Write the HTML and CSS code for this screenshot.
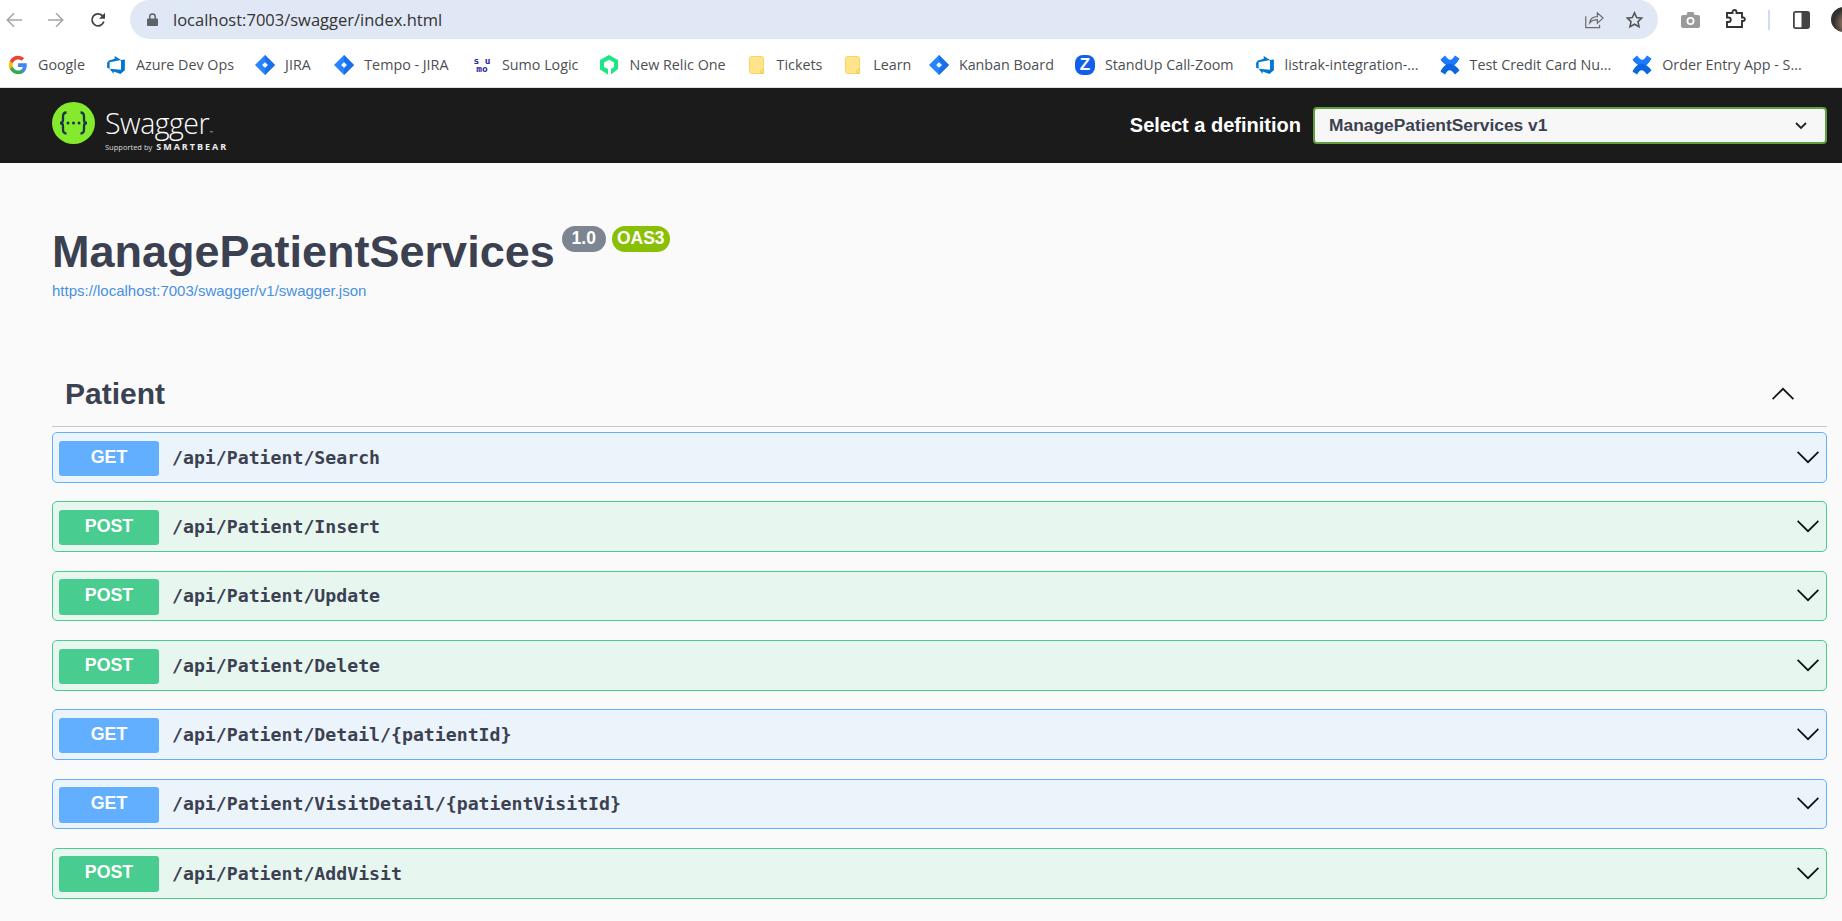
FILE: index.html
```html
<!DOCTYPE html>
<html lang="en">
<head>
<meta charset="utf-8">
<title>Swagger UI</title>
<link rel="stylesheet" href="styles.css">
</head>
<body>
<svg class="defs" width="0" height="0" aria-hidden="true">
  <defs>
    <symbol id="jira" viewBox="0 0 20 20"><path fill="#2684ff" d="M10 0l10 10-10 10L0 10z"/><path fill="#1a6fe8" d="M10 0l10 10-10 10 0-6 4-4-4-4z"/><path fill="#fff" d="M10 7.200l2.800 2.800-2.800 2.800L7.200 10z"/></symbol>
    <symbol id="azure" viewBox="0 0 18 18"><path fill="#0078d4" d="M17 4v9.740l-4 3.280-6.200-2.260V17L3.290 12.410l10.230.8V4.440Zm-3.410.49L7.850 1V3.290L2.580 4.840 1 6.870v4.610l2.260 1V6.570Z"/></symbol>
    <symbol id="folder" viewBox="0 0 20 20"><g transform="translate(2 1)"><path fill="#ffe489" stroke="#f7d566" d="M2.500.5h10a2 2 0 0 1 2 2v13a2 2 0 0 1-2 2h-10a2 2 0 0 1-2-2v-13a2 2 0 0 1 2-2z"/><path fill="#ffe489" stroke="#f3c94f" d="M12 17.500v-3a1.200 1.200 0 0 1 2.600 0v3z"/></g></symbol>
    <symbol id="confluence" viewBox="0 0 20 20"><path fill="#1d7afc" d="M.5 4.500L5 .5c2 2.600 3.400 4.200 5.300 4.200 1.700 0 3-1.500 4.700-4.200l4.500 3C17 8.500 14.300 11 10.600 11 6.500 11 3 8.500.5 4.500z"/><path fill="#0c66e4" d="M19.500 15.500L15 19.500c-2-2.600-3.400-4.200-5.300-4.200-1.700 0-3 1.500-4.700 4.200l-4.500-3C3 11.500 5.700 9 9.400 9c4.100 0 7.600 2.500 10.100 6.500z"/></symbol>
    <symbol id="chev-down" viewBox="0 0 22 13"><path fill="none" stroke="#111" stroke-width="1.700" d="M.6.8L11 11.200 21.400.8"/></symbol>
  </defs>
</svg>

<header class="browser-toolbar">
  <div class="nav-buttons">
    <svg class="nav-icon" viewBox="0 0 16 16"><path fill="none" stroke="#a6a6a6" stroke-width="1.600" d="M16 8H1.500M8 1.300L1.300 8 8 14.700"/></svg>
    <svg class="nav-icon" viewBox="0 0 16 16"><path fill="none" stroke="#a6a6a6" stroke-width="1.600" d="M0 8h14.500M8 1.300L14.700 8 8 14.700"/></svg>
    <svg class="nav-icon" viewBox="0 0 16 16"><path fill="none" stroke="#444" stroke-width="1.800" d="M13.800 9.500A6 6 0 1 1 12.300 3.600L14 5.300"/><path fill="#444" d="M15 .8v6H9z"/></svg>
  </div>
  <div class="omnibox">
    <svg class="lock" viewBox="0 0 12 14"><path fill="#5f6368" d="M1 6h10a1 1 0 0 1 1 1v6a1 1 0 0 1-1 1H1a1 1 0 0 1-1-1V7a1 1 0 0 1 1-1z"/><path fill="none" stroke="#5f6368" stroke-width="1.600" d="M3 6.500V4a3 3 0 0 1 6 0v2.500"/></svg>
    <span class="url">localhost:7003/swagger/index.html</span>
    <svg class="omni-icon" viewBox="0 0 20 18"><path fill="none" stroke="#6b6b6b" stroke-width="1.300" d="M.8 5v12h14.500v-3M5 12c.5-4 3.500-6.500 8-6.500V1.500L19 7l-6 5.300V8.500c-3.500 0-6 1-8 3.500z"/></svg>
    <svg class="omni-icon" viewBox="0 0 18 18"><path fill="none" stroke="#555" stroke-width="1.600" d="M9 1.800l2.200 4.700 5 .6-3.700 3.500 1 5.100L9 13.200l-4.500 2.500 1-5.100L1.800 7.100l5-.6z"/></svg>
  </div>
  <div class="toolbar-right">
    <svg class="camera" viewBox="0 0 19 16"><path fill="#9a9a9a" d="M2 3h3.500l1-3h6l1 3H17a2 2 0 0 1 2 2v9a2 2 0 0 1-2 2H2a2 2 0 0 1-2-2V5a2 2 0 0 1 2-2z"/><circle cx="9.500" cy="9" r="4" fill="#fff"/><circle cx="9.500" cy="9" r="2.200" fill="#9a9a9a"/></svg>
    <svg class="puzzle" viewBox="0 0 21 19"><path fill="none" stroke="#333" stroke-width="1.900" d="M1 4h5.500V3a2 2 0 0 1 4 0v1H16v4.500h1.500a1.800 1.800 0 0 1 0 3.500H16v6H1v-5h1.500a2 2 0 0 0 0-4.500H1z"/></svg>
    <span class="toolbar-divider"></span>
    <svg class="panel" viewBox="0 0 17 18"><rect x=".9" y=".9" width="15.200" height="16.200" rx="1.500" fill="#fff" stroke="#444" stroke-width="1.800"/><rect x="8.500" y="1" width="7.500" height="16" fill="#444"/></svg>
    <span class="avatar"></span>
  </div>
</header>

<nav class="bookmarks">
  <a class="bookmark">
    <svg class="bm-icon" viewBox="0 0 24 24"><path fill="#4285F4" d="M22.560 12.250c0-.78-.07-1.530-.2-2.250H12v4.260h5.920c-.26 1.370-1.040 2.530-2.210 3.310v2.770h3.570c2.080-1.920 3.280-4.740 3.280-8.090z"/><path fill="#34A853" d="M12 23c2.970 0 5.460-.98 7.280-2.660l-3.570-2.770c-.98.66-2.230 1.060-3.710 1.060-2.860 0-5.290-1.930-6.160-4.530H2.180v2.840C3.990 20.530 7.700 23 12 23z"/><path fill="#FBBC05" d="M5.840 14.090c-.22-.66-.35-1.360-.35-2.090s.13-1.430.35-2.090V7.070H2.180C1.430 8.550 1 10.220 1 12s.43 3.450 1.180 4.930l3.660-2.840z"/><path fill="#EA4335" d="M12 5.380c1.620 0 3.060.56 4.210 1.640l3.150-3.150C17.450 2.090 14.970 1 12 1 7.700 1 3.990 3.470 2.180 7.070l3.660 2.840c.87-2.600 3.300-4.530 6.160-4.530z"/></svg>
    <span>Google</span>
  </a>
  <a class="bookmark"><svg class="bm-icon"><use href="#azure"/></svg><span>Azure Dev Ops</span></a>
  <a class="bookmark"><svg class="bm-icon"><use href="#jira"/></svg><span>JIRA</span></a>
  <a class="bookmark bookmark-wide"><svg class="bm-icon"><use href="#jira"/></svg><span>Tempo - JIRA</span></a>
  <a class="bookmark bookmark-wide"><span class="sumo">s u<br>mo</span><span>Sumo Logic</span></a>
  <a class="bookmark">
    <svg class="bm-icon" viewBox="0 0 20 20"><path fill="#1ce783" d="M10 0l9 5v9l-7 5.500V14l3-2V7.500L10 4.800 5 7.500V12l4 2v5.500L1 14.500V5z"/></svg>
    <span>New Relic One</span>
  </a>
  <a class="bookmark"><svg class="bm-icon"><use href="#folder"/></svg><span>Tickets</span></a>
  <a class="bookmark"><svg class="bm-icon"><use href="#folder"/></svg><span>Learn</span></a>
  <a class="bookmark bookmark-tight"><svg class="bm-icon"><use href="#jira"/></svg><span>Kanban Board</span></a>
  <a class="bookmark"><span class="zoom-logo">Z</span><span>StandUp Call-Zoom</span></a>
  <a class="bookmark"><svg class="bm-icon"><use href="#azure"/></svg><span>listrak-integration-...</span></a>
  <a class="bookmark"><svg class="bm-icon"><use href="#confluence"/></svg><span>Test Credit Card Nu...</span></a>
  <a class="bookmark"><svg class="bm-icon"><use href="#confluence"/></svg><span>Order Entry App - S...</span></a>
</nav>

<div class="swagger-topbar">
  <div class="brand">
    <svg class="brand-mark" viewBox="0 0 43 42">
      <ellipse cx="21.500" cy="21" rx="21.500" ry="21" fill="#85ea2d"/>
      <path fill="none" stroke="#173646" stroke-width="2.300" d="M14.500 10.500c-3 0-3.500 1.500-3.500 4v3.500c0 2-1 3-3 3 2 0 3 1 3 3v3.500c0 2.500.5 4 3.500 4M28.500 10.500c3 0 3.500 1.500 3.500 4v3.500c0 2 1 3 3 3-2 0-3 1-3 3v3.500c0 2.500-.5 4-3.500 4"/>
      <circle cx="16" cy="21" r="1.500" fill="#173646"/><circle cx="21.500" cy="21" r="1.500" fill="#173646"/><circle cx="27" cy="21" r="1.500" fill="#173646"/>
    </svg>
    <div class="brand-text">
      <div class="brand-name">Swagger<sup class="brand-tm">™</sup></div>
      <div class="brand-sub">Supported by <b class="brand-smartbear">SMARTBEAR</b></div>
    </div>
  </div>
  <div class="definition">
    <span class="definition-label">Select a definition</span>
    <div class="definition-select">
      <span>ManagePatientServices v1</span>
      <svg class="select-chevron" viewBox="0 0 12 8"><path fill="none" stroke="#222" stroke-width="1.800" d="M1 1l5 5 5-5"/></svg>
    </div>
  </div>
</div>

<main class="content">
  <section class="info">
    <div class="title-row">
      <h1 class="title">ManagePatientServices</h1>
      <span class="badge badge-version">1.0</span>
      <span class="badge badge-oas">OAS3</span>
    </div>
    <a class="spec-link">https://localhost:7003/swagger/v1/swagger.json</a>
  </section>

  <section class="tag-section">
    <div class="tag-header">
      <h2 class="tag-title">Patient</h2>
      <svg class="tag-chevron" viewBox="0 0 22 13"><path fill="none" stroke="#111" stroke-width="1.700" d="M.6 12.200L11 1.800l10.400 10.400"/></svg>
    </div>
    <div class="ops">
      <div class="op op-get"><span class="method">GET</span><span class="path">/api/Patient/Search</span><svg class="op-chevron"><use href="#chev-down"/></svg></div>
      <div class="op op-post"><span class="method">POST</span><span class="path">/api/Patient/Insert</span><svg class="op-chevron"><use href="#chev-down"/></svg></div>
      <div class="op op-post"><span class="method">POST</span><span class="path">/api/Patient/Update</span><svg class="op-chevron"><use href="#chev-down"/></svg></div>
      <div class="op op-post"><span class="method">POST</span><span class="path">/api/Patient/Delete</span><svg class="op-chevron"><use href="#chev-down"/></svg></div>
      <div class="op op-get"><span class="method">GET</span><span class="path">/api/Patient/Detail/{patientId}</span><svg class="op-chevron"><use href="#chev-down"/></svg></div>
      <div class="op op-get"><span class="method">GET</span><span class="path">/api/Patient/VisitDetail/{patientVisitId}</span><svg class="op-chevron"><use href="#chev-down"/></svg></div>
      <div class="op op-post"><span class="method">POST</span><span class="path">/api/Patient/AddVisit</span><svg class="op-chevron"><use href="#chev-down"/></svg></div>
    </div>
  </section>
</main>
</body>
</html>
```

FILE: styles.css
```css
* { box-sizing: border-box; }
html, body { margin: 0; height: 921px; overflow: hidden; }
body { background: #fafafa; font-family: "Liberation Sans", Arial, sans-serif; color: #3b4151; }
.defs { position: absolute; }

.browser-toolbar { display: flex; align-items: center; height: 39px; background: #fff; overflow: hidden; }
.nav-buttons { display: flex; align-items: center; gap: 26px; flex: none; width: 130px; padding-left: 6px; }
.nav-icon { width: 16px; height: 16px; display: block; }
.omnibox { display: flex; align-items: center; flex: none; width: 1528px; height: 39px; background: #e1e8f5; border-radius: 20px; padding: 0 14px 0 17px; }
.lock { width: 11px; height: 13px; margin-right: 15px; }
.url { flex: 1; font-family: "Open Sans", sans-serif; font-size: 16.500px; color: #333; }
.omni-icon { width: 19px; height: 18px; margin-left: 21px; }
.toolbar-right { display: flex; align-items: center; flex: none; padding-left: 23px; }
.camera { width: 19px; height: 16px; }
.puzzle { width: 21px; height: 19px; margin-left: 26px; margin-top: -3px; }
.toolbar-divider { width: 2px; height: 20px; background: #cfdcf2; margin-left: 21px; }
.panel { width: 17px; height: 18px; margin-left: 23px; }
.avatar { width: 25px; height: 25px; border-radius: 50%; margin-left: 21px; background: radial-gradient(circle at 70% 65%, #8a7566 0 22%, #33302e 62%); flex: none; }

.bookmarks { display: flex; align-items: center; gap: 21px; height: 49px; padding: 3px 0 0 8px; background: #fff; border-bottom: 1px solid #dfe1e5; overflow: hidden; white-space: nowrap; }
.bookmark { display: flex; align-items: center; gap: 10px; font-family: "Open Sans", sans-serif; font-size: 14.300px; color: #4d4f53; }
.bookmark-wide { margin-left: 2.500px; }
.bookmark-tight { margin-left: -3.500px; }
.bm-icon { width: 20px; height: 20px; flex: none; }
.sumo { width: 20px; font-family: "DejaVu Sans Mono", monospace; font-size: 9.500px; line-height: 8px; font-weight: 700; color: #2b1fa0; text-align: center; }
.zoom-logo { width: 20px; height: 20px; border-radius: 8px; background: #1160e8; color: #fff; font-family: "Liberation Sans", sans-serif; font-weight: 700; font-size: 17px; line-height: 20px; text-align: center; }

.swagger-topbar { display: flex; align-items: center; justify-content: space-between; height: 75px; background: #1b1b1b; padding: 0 15px 0 52px; }
.brand { display: flex; align-items: flex-start; gap: 10px; height: 75px; padding-top: 14px; }
.brand-mark { width: 43px; height: 42px; }
.brand-text { color: #fff; font-family: "Open Sans", sans-serif; }
.brand-name { font-weight: 300; font-size: 28.500px; line-height: 38px; letter-spacing: -.5px; margin-top: 2px; }
.brand-tm { font-size: 4px; line-height: 0; vertical-align: baseline; margin-left: 1px; }
.brand-sub { font-size: 7.500px; line-height: 9px; color: #ddd; white-space: nowrap; }
.brand-smartbear { font-size: 9px; letter-spacing: 2px; margin-left: 2px; color: #eee; }
.definition { display: flex; align-items: center; gap: 12px; }
.definition-label { font-weight: 700; font-size: 20px; color: #fff; }
.definition-select { display: flex; align-items: center; justify-content: space-between; width: 514px; height: 37px; padding: 0 18px 0 14px; background: #f7f7f7; border: 2px solid #62a03f; border-radius: 4px; font-weight: 700; font-size: 17.400px; color: #3b4151; }
.select-chevron { width: 12px; height: 8px; }

.content { padding: 0 15px 0 52px; }
.info { padding-top: 64px; height: 189px; }
.title-row { display: flex; align-items: flex-start; height: 50px; }
.title { margin: 0; font-size: 45px; line-height: 50px; font-weight: 700; color: #3b4151; }
.badge { display: block; height: 26px; margin-top: -1px; border-radius: 13px; font-weight: 700; font-size: 17.500px; line-height: 25px; text-align: center; color: #fff; }
.badge-version { width: 44px; margin-left: 7px; background: #7d8492; }
.badge-oas { width: 58px; margin-left: 6px; background: #89bf04; }
.spec-link { display: block; font-size: 15px; line-height: 18px; margin-top: 5px; color: #4990e2; }

.tag-header { display: flex; align-items: center; justify-content: space-between; height: 75px; padding: 9px 33px 0 13px; border-bottom: 1px solid #c5c8cd; }
.tag-title { margin: 0; font-size: 30px; font-weight: 700; color: #3b4151; }
.tag-chevron { width: 22px; height: 13px; }
.ops { display: flex; flex-direction: column; gap: 18.670px; margin-top: 5px; }
.op { display: flex; align-items: center; height: 50.670px; padding: 0 7px 0 6px; border: 1.500px solid; border-radius: 5px; }
.op-get { background: #ebf3fb; border-color: #61affe; }
.op-post { background: #e8f6f0; border-color: #49cc90; }
.method { width: 100px; height: 35.500px; margin-top: 2px; border-radius: 3px; color: #fff; font-weight: 700; font-size: 17.800px; line-height: 33px; text-align: center; }
.op-get .method { background: #61affe; }
.op-post .method { background: #49cc90; }
.path { flex: 1; margin-left: 13px; font-family: "DejaVu Sans Mono", monospace; font-weight: 700; font-size: 18.200px; color: #3b4151; }
.op-chevron { width: 22px; height: 13px; flex: none; }
```
